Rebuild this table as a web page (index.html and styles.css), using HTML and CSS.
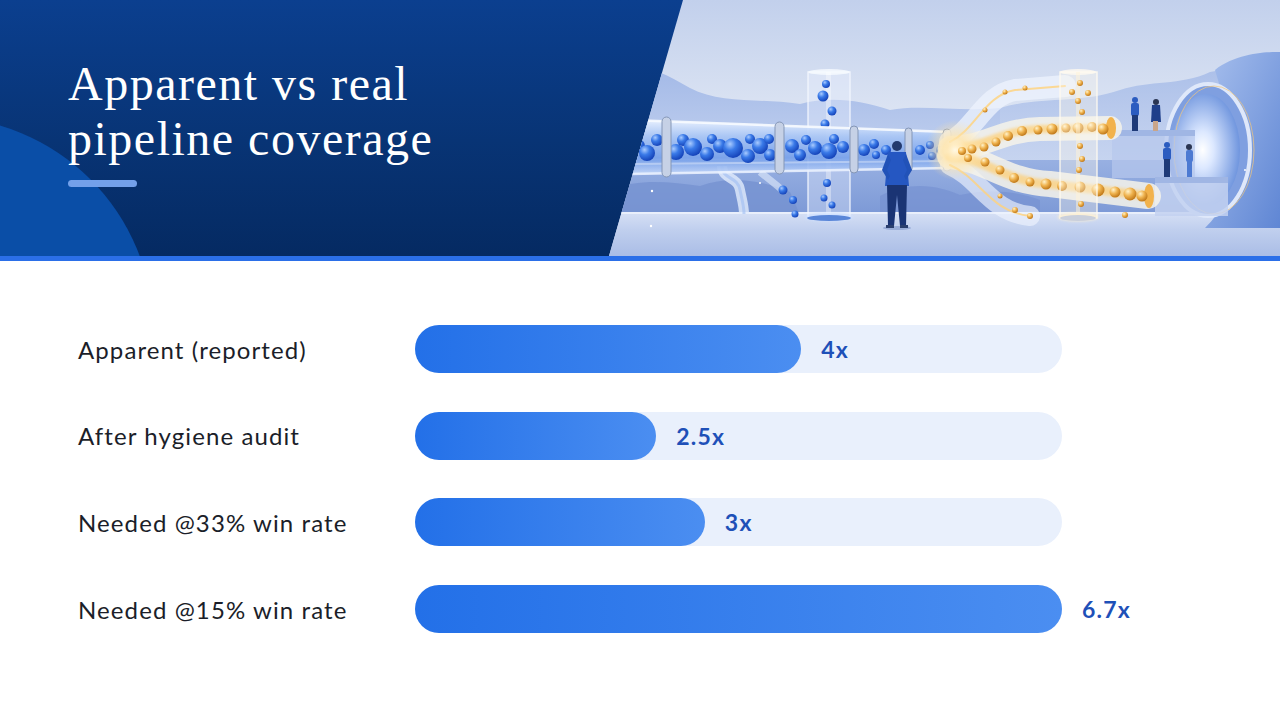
FILE: index.html
```html
<!DOCTYPE html>
<html lang="en">
<head>
<meta charset="utf-8">
<title>Apparent vs real pipeline coverage</title>
<link rel="stylesheet" href="styles.css">
</head>
<body>
<header class="hero">
  <div class="hero-text">
    <h1 class="title">Apparent vs real<br>pipeline coverage</h1>
    <div class="accent"></div>
  </div>
  <div class="hero-art">
    <svg class="art" viewBox="609 0 671 256" width="671" height="256" xmlns="http://www.w3.org/2000/svg">
      <defs>
        <linearGradient id="sky" x1="0" y1="0" x2="0" y2="1">
          <stop offset="0" stop-color="#c2d0ec"/>
          <stop offset="0.45" stop-color="#dce4f3"/>
          <stop offset="1" stop-color="#d2dcf1"/>
        </linearGradient>
        <linearGradient id="farMtn" x1="0" y1="0" x2="0" y2="1">
          <stop offset="0" stop-color="#a3b9e7"/>
          <stop offset="1" stop-color="#c6d4f0"/>
        </linearGradient>
        <linearGradient id="band" x1="0" y1="0" x2="0" y2="1">
          <stop offset="0" stop-color="#98b0e2"/>
          <stop offset="1" stop-color="#7c99d6"/>
        </linearGradient>
        <linearGradient id="floor" x1="0" y1="0" x2="0" y2="1">
          <stop offset="0" stop-color="#d6e0f5"/>
          <stop offset="0.4" stop-color="#c0cfee"/>
          <stop offset="1" stop-color="#aabde6"/>
        </linearGradient>
        <linearGradient id="glass" x1="0" y1="0" x2="0" y2="1">
          <stop offset="0" stop-color="#eaf2ff" stop-opacity="0.95"/>
          <stop offset="0.3" stop-color="#a9c6f5" stop-opacity="0.9"/>
          <stop offset="0.7" stop-color="#6f9be9" stop-opacity="0.85"/>
          <stop offset="1" stop-color="#c4d7f8" stop-opacity="0.95"/>
        </linearGradient>
        <radialGradient id="blueBall" cx="0.35" cy="0.3" r="0.7">
          <stop offset="0" stop-color="#a9cbff"/>
          <stop offset="0.45" stop-color="#3a7ae8"/>
          <stop offset="1" stop-color="#1645bb"/>
        </radialGradient>
        <radialGradient id="goldBall" cx="0.35" cy="0.3" r="0.7">
          <stop offset="0" stop-color="#fff3cc"/>
          <stop offset="0.5" stop-color="#f0b450"/>
          <stop offset="1" stop-color="#c27a1a"/>
        </radialGradient>
        <radialGradient id="glow" cx="0.5" cy="0.5" r="0.5">
          <stop offset="0" stop-color="#fff8e4" stop-opacity="1"/>
          <stop offset="0.4" stop-color="#ffe3a6" stop-opacity="0.75"/>
          <stop offset="1" stop-color="#ffe3a6" stop-opacity="0"/>
        </radialGradient>
        <radialGradient id="portalGlow" cx="0.45" cy="0.5" r="0.55">
          <stop offset="0" stop-color="#ffffff"/>
          <stop offset="0.3" stop-color="#dce8ff"/>
          <stop offset="1" stop-color="#6f95de"/>
        </radialGradient>
        <linearGradient id="blob" x1="0" y1="0" x2="1" y2="1">
          <stop offset="0" stop-color="#a7bfed"/>
          <stop offset="1" stop-color="#5f86d4"/>
        </linearGradient>
        <filter id="soft" x="-50%" y="-50%" width="200%" height="200%">
          <feGaussianBlur stdDeviation="3"/>
        </filter>
        <filter id="softer" x="-50%" y="-50%" width="200%" height="200%">
          <feGaussianBlur stdDeviation="1.5"/>
        </filter>
      </defs>

      <rect x="609" y="0" width="671" height="256" fill="url(#sky)"/>

      <!-- far mountains -->
      <path d="M609 70 C640 62 660 70 690 88 C720 104 760 98 800 104 C830 96 860 100 890 110 C920 104 960 112 1000 108 L1000 170 L609 170 Z" fill="url(#farMtn)"/>
      <path d="M1000 108 C1040 96 1080 104 1120 90 C1150 80 1180 86 1210 72 L1280 60 L1280 170 L1000 170 Z" fill="url(#farMtn)" opacity="0.85"/>

      <!-- mid band under pipe -->
      <path d="M609 160 L1280 160 L1280 215 L609 215 Z" fill="url(#band)"/>
      <path d="M609 190 C640 178 670 182 700 186 C730 175 760 180 790 192 L800 215 L609 215 Z" fill="#7692d1" opacity="0.8"/>
      <path d="M880 196 C910 180 940 186 960 195 C990 188 1020 192 1040 200 L1040 215 L880 215 Z" fill="#7692d1" opacity="0.7"/>

      <!-- floor -->
      <rect x="609" y="212" width="671" height="44" fill="url(#floor)"/>
      <rect x="609" y="212" width="671" height="2" fill="#eef3fd" opacity="0.8"/>

      <!-- right blob -->
      <path d="M1215 70 C1240 50 1280 52 1280 52 L1280 228 L1205 228 C1235 200 1240 150 1215 70 Z" fill="url(#blob)"/>

      <!-- portal -->
      <ellipse cx="1208" cy="150" rx="42" ry="66" fill="#7f9fe0"/>
      <ellipse cx="1206" cy="150" rx="34" ry="56" fill="url(#portalGlow)"/>
      <ellipse cx="1208" cy="150" rx="42" ry="66" fill="none" stroke="#dfe8fa" stroke-width="4"/>
      <ellipse cx="1214" cy="150" rx="40" ry="64" fill="none" stroke="#f3c77a" stroke-width="1" opacity="0.7"/>

      <!-- platforms -->
      <path d="M1112 130 L1195 130 L1195 136 L1112 136 Z" fill="#a0b6e4"/>
      <path d="M1112 136 L1195 136 L1195 178 L1112 178 Z" fill="#b7c8ec" opacity="0.7"/>
      <path d="M1155 177 L1228 177 L1228 183 L1155 183 Z" fill="#a0b6e4"/>
      <path d="M1155 183 L1228 183 L1228 216 L1155 216 Z" fill="#c3d1f0" opacity="0.85"/>

      <!-- people on platforms -->
      <g fill="#2b5cc0">
        <circle cx="1135" cy="100" r="3"/>
        <rect x="1131" y="103" width="8" height="13" rx="2"/>
        <rect x="1132" y="115" width="6" height="16" fill="#1e3a78"/>
        <circle cx="1156" cy="102" r="3" fill="#2a3552"/>
        <path d="M1152 105 L1160 105 L1161 122 L1151 122 Z" fill="#1f3f8a"/>
        <rect x="1153" y="121" width="5" height="10" fill="#c9a58a"/>
        <circle cx="1167" cy="145" r="3"/>
        <rect x="1163" y="148" width="8" height="12" rx="2"/>
        <rect x="1164" y="159" width="6" height="18" fill="#1e3a78"/>
        <circle cx="1189" cy="147" r="3" fill="#2a3552"/>
        <rect x="1186" y="150" width="7" height="12" rx="2" fill="#4d7ad2"/>
        <rect x="1187" y="161" width="5" height="16" fill="#4d7ad2"/>
      </g>

      <!-- small drain pipe -->
      <path d="M722 166 C722 180 738 176 740 190 C742 200 744 206 744 214" fill="none" stroke="#e2ecfc" stroke-width="10" opacity="0.8"/>
      <path d="M722 166 C722 180 738 176 740 190 C742 200 744 206 744 214" fill="none" stroke="#9fbdf2" stroke-width="3" opacity="0.6"/>
      <path d="M760 172 C770 180 778 186 782 190" fill="none" stroke="#e2ecfc" stroke-width="7" opacity="0.6"/>
      <circle cx="783" cy="190" r="4.5" fill="url(#blueBall)"/>
      <circle cx="793" cy="200" r="4" fill="url(#blueBall)"/>
      <circle cx="795" cy="214" r="3.5" fill="url(#blueBall)"/>

      <!-- vertical tube 1 -->
      <rect x="808" y="72" width="42" height="146" fill="#eaf2ff" opacity="0.35"/>
      <rect x="808" y="72" width="42" height="146" fill="none" stroke="#f4f8ff" stroke-width="1.5" opacity="0.8"/>
      <ellipse cx="829" cy="72" rx="21" ry="3" fill="#f7fbff" opacity="0.8"/>
      <rect x="826" y="72" width="5" height="146" fill="#ffffff" opacity="0.35"/>
      <circle cx="826" cy="84" r="4" fill="url(#blueBall)"/>
      <circle cx="823" cy="96" r="5.5" fill="url(#blueBall)"/>
      <circle cx="832" cy="111" r="4.5" fill="url(#blueBall)"/>
      <circle cx="825" cy="124" r="4.5" fill="url(#blueBall)"/>
      <circle cx="827" cy="183" r="4" fill="url(#blueBall)"/>
      <circle cx="824" cy="198" r="3.5" fill="url(#blueBall)"/>
      <circle cx="832" cy="205" r="3.5" fill="url(#blueBall)"/>
      <ellipse cx="829" cy="217" rx="24" ry="4" fill="#cfe0ff" filter="url(#softer)"/>
      <ellipse cx="829" cy="218" rx="22" ry="3" fill="#5a86d8"/>

      <!-- main pipe -->
      <path d="M630 120 L950 132 L950 168 L630 174 Z" fill="url(#glass)"/>
      <path d="M630 120 L950 132" stroke="#f8fbff" stroke-width="2.5" opacity="0.9"/>
      <path d="M630 174 L950 168" stroke="#eef4ff" stroke-width="2.5" opacity="0.85"/>
      <path d="M630 164 L950 161" stroke="#ffffff" stroke-width="2" opacity="0.35"/>
      <g fill="url(#blueBall)">
        <circle cx="638" cy="146" r="7"/>
        <circle cx="647" cy="153" r="8"/>
        <circle cx="657" cy="140" r="6"/>
        <circle cx="676" cy="152" r="8"/>
        <circle cx="683" cy="140" r="6"/>
        <circle cx="693" cy="147" r="9"/>
        <circle cx="707" cy="154" r="7"/>
        <circle cx="712" cy="139" r="5"/>
        <circle cx="720" cy="146" r="7"/>
        <circle cx="733" cy="148" r="10"/>
        <circle cx="748" cy="156" r="7"/>
        <circle cx="750" cy="139" r="5"/>
        <circle cx="760" cy="146" r="8"/>
        <circle cx="770" cy="155" r="6"/>
        <circle cx="769" cy="139" r="5"/>
        <circle cx="792" cy="146" r="7"/>
        <circle cx="800" cy="155" r="6"/>
        <circle cx="806" cy="140" r="5"/>
        <circle cx="815" cy="148" r="7"/>
        <circle cx="829" cy="151" r="8"/>
        <circle cx="834" cy="139" r="5"/>
        <circle cx="843" cy="147" r="6"/>
        <circle cx="864" cy="150" r="6"/>
        <circle cx="874" cy="144" r="5"/>
        <circle cx="876" cy="155" r="4"/>
        <circle cx="886" cy="150" r="5"/>
        <circle cx="920" cy="150" r="5"/>
        <circle cx="930" cy="145" r="4"/>
        <circle cx="932" cy="156" r="4"/>
        <circle cx="940" cy="150" r="4"/>
      </g>
      <!-- rings -->
      <g fill="#c6d1e6" stroke="#8496b6" stroke-width="1">
        <rect x="662" y="117" width="9" height="60" rx="4.5"/>
        <rect x="775" y="122" width="9" height="52" rx="4.5"/>
        <rect x="850" y="126" width="8" height="47" rx="4"/>
        <rect x="905" y="128" width="7" height="44" rx="3.5"/>
        <rect x="943" y="129" width="8" height="42" rx="4" fill="#d9e2f3"/>
      </g>

      <!-- golden branches: outer glass tubes -->
      <g fill="none" stroke-linecap="round">
        <path d="M950 142 C975 130 985 95 1015 90 L1065 86" stroke="#eef3fd" stroke-width="22" opacity="0.75"/>
        <path d="M950 165 C980 178 990 212 1030 216" stroke="#eef3fd" stroke-width="20" opacity="0.65"/>
        <path d="M950 148 C985 148 1000 130 1040 129 L1110 128" stroke="#f6f3ea" stroke-width="24" opacity="0.85"/>
        <path d="M950 156 C985 158 1005 182 1050 184 L1148 196" stroke="#f6f3ea" stroke-width="26" opacity="0.85"/>
        <path d="M950 148 C985 148 1000 130 1040 129 L1110 128" stroke="#ffcf72" stroke-width="8" opacity="0.7" filter="url(#softer)"/>
        <path d="M950 156 C985 158 1005 182 1050 184 L1148 196" stroke="#ffcf72" stroke-width="9" opacity="0.7" filter="url(#softer)"/>
        <path d="M950 142 C975 130 985 95 1015 90 L1065 86" stroke="#ffd27a" stroke-width="2" opacity="0.8"/>
        <path d="M950 165 C980 178 990 212 1030 216" stroke="#ffd27a" stroke-width="2" opacity="0.8"/>
      </g>
      <ellipse cx="955" cy="150" rx="30" ry="30" fill="url(#glow)"/>
      <ellipse cx="1111" cy="128" rx="5" ry="11" fill="#f2b24b"/>
      <ellipse cx="1149" cy="196" rx="5" ry="12" fill="#f2b24b"/>
      <g fill="url(#goldBall)">
        <circle cx="962" cy="151" r="4"/>
        <circle cx="972" cy="149" r="4.5"/>
        <circle cx="984" cy="147" r="4.5"/>
        <circle cx="996" cy="142" r="4.5"/>
        <circle cx="1008" cy="136" r="5"/>
        <circle cx="1022" cy="131" r="5"/>
        <circle cx="1038" cy="130" r="4.5"/>
        <circle cx="1052" cy="129" r="5.5"/>
        <circle cx="1066" cy="128" r="4.5"/>
        <circle cx="1078" cy="128" r="5.5"/>
        <circle cx="1092" cy="127" r="5"/>
        <circle cx="1103" cy="129" r="5.5"/>
        <circle cx="968" cy="158" r="4"/>
        <circle cx="985" cy="162" r="4.5"/>
        <circle cx="1000" cy="170" r="4.5"/>
        <circle cx="1014" cy="178" r="5"/>
        <circle cx="1030" cy="182" r="4.5"/>
        <circle cx="1046" cy="184" r="5.5"/>
        <circle cx="1062" cy="186" r="5"/>
        <circle cx="1080" cy="187" r="5.5"/>
        <circle cx="1098" cy="190" r="6.5"/>
        <circle cx="1115" cy="192" r="5.5"/>
        <circle cx="1130" cy="194" r="6.5"/>
        <circle cx="1142" cy="196" r="5.5"/>
        <circle cx="985" cy="110" r="2.5"/>
        <circle cx="1005" cy="92" r="2.5"/>
        <circle cx="1025" cy="88" r="2.5"/>
        <circle cx="1015" cy="210" r="3"/>
        <circle cx="1030" cy="216" r="3"/>
        <circle cx="1000" cy="196" r="2.5"/>
      </g>

      <!-- vertical tube 2 -->
      <rect x="1060" y="72" width="37" height="146" fill="#fff8ea" opacity="0.35"/>
      <rect x="1060" y="72" width="37" height="146" fill="none" stroke="#fffaf0" stroke-width="1.5" opacity="0.85"/>
      <ellipse cx="1078" cy="72" rx="18" ry="3" fill="#fffaf0" opacity="0.8"/>
      <rect x="1076" y="72" width="4" height="146" fill="#fff3d8" opacity="0.5"/>
      <g fill="url(#goldBall)">
        <circle cx="1080" cy="83" r="3"/>
        <circle cx="1072" cy="92" r="3"/>
        <circle cx="1088" cy="93" r="3"/>
        <circle cx="1078" cy="101" r="3"/>
        <circle cx="1082" cy="112" r="3"/>
        <circle cx="1080" cy="146" r="3"/>
        <circle cx="1082" cy="159" r="3"/>
        <circle cx="1079" cy="170" r="3"/>
        <circle cx="1081" cy="204" r="3"/>
        <circle cx="1125" cy="215" r="3"/>
      </g>
      <ellipse cx="1078" cy="217" rx="20" ry="4" fill="#fff1d2" filter="url(#softer)"/>
      <ellipse cx="1078" cy="218" rx="18" ry="3" fill="#c9cfdc"/>

      <!-- person -->
      <g>
        <ellipse cx="897" cy="228" rx="14" ry="2" fill="#7d95c8" opacity="0.6"/>
        <circle cx="897" cy="146" r="5" fill="#233a6e"/>
        <path d="M888 152 L906 152 L909 186 L885 186 Z" fill="#2557c2"/>
        <path d="M888 154 L882 170 L888 180 L890 176 L887 170 L891 160 Z" fill="#2152b8"/>
        <path d="M906 154 L912 170 L906 180 L904 176 L907 170 L903 160 Z" fill="#2152b8"/>
        <path d="M887 185 L907 185 L906 226 L900 226 L897 195 L894 226 L888 226 Z" fill="#1a3474"/>
        <rect x="886" y="225" width="8" height="3" fill="#2a3f6e"/>
        <rect x="900" y="225" width="8" height="3" fill="#2a3f6e"/>
      </g>

      <!-- sparkles -->
      <g fill="#ffffff">
        <circle cx="652" cy="191" r="1.2"/>
        <circle cx="651" cy="226" r="1.2"/>
        <circle cx="760" cy="183" r="1"/>
        <circle cx="1245" cy="170" r="1"/>
      </g>
    </svg>
  </div>
</header>

<main class="chart">
  <div class="row">
    <div class="label">Apparent (reported)</div>
    <div class="track">
      <div class="fill" style="width: 59.7%"></div>
      <span class="value">4x</span>
    </div>
  </div>
  <div class="row">
    <div class="label">After hygiene audit</div>
    <div class="track">
      <div class="fill" style="width: 37.3%"></div>
      <span class="value">2.5x</span>
    </div>
  </div>
  <div class="row">
    <div class="label">Needed @33% win rate</div>
    <div class="track">
      <div class="fill" style="width: 44.8%"></div>
      <span class="value">3x</span>
    </div>
  </div>
  <div class="row">
    <div class="label">Needed @15% win rate</div>
    <div class="track">
      <div class="fill" style="width: 100%"></div>
      <span class="value">6.7x</span>
    </div>
  </div>
</main>
</body>
</html>
```

FILE: styles.css
```css
* {
  box-sizing: border-box;
}

html, body {
  margin: 0;
  padding: 0;
}

body {
  width: 1280px;
  height: 720px;
  overflow: hidden;
  background: #ffffff;
  font-family: "Lato", "Noto Sans", sans-serif;
}

.hero {
  position: relative;
  display: flex;
  height: 261px;
  background: linear-gradient(180deg, #0b3f8f 0%, #083475 55%, #052a62 100%);
  border-bottom: 5px solid #2b6fe8;
  overflow: hidden;
}

.hero::before {
  content: "";
  position: absolute;
  left: -273px;
  top: 117px;
  width: 426px;
  height: 426px;
  border-radius: 50%;
  background: #0a4ea7;
}

.hero-text {
  position: relative;
  z-index: 1;
  width: 609px;
  flex: none;
  padding: 56px 0 0 68px;
}

.title {
  margin: 0;
  font-family: "Liberation Serif", "Times New Roman", serif;
  font-weight: 400;
  font-size: 48px;
  line-height: 55px;
  letter-spacing: 1.5px;
  color: #ffffff;
}

.accent {
  margin-top: 14px;
  width: 69px;
  height: 7px;
  border-radius: 4px;
  background: #73a0ea;
}

.hero-art {
  flex: 1;
  height: 256px;
  clip-path: polygon(74px 0, 100% 0, 100% 100%, 0 100%);
}

.art {
  display: block;
  width: 671px;
  height: 256px;
}

.chart {
  display: flex;
  flex-direction: column;
  gap: 38.7px;
  padding: 64px 0 0 78px;
}

.row {
  display: flex;
  align-items: center;
  height: 48px;
}

.label {
  width: 337px;
  flex: none;
  font-size: 24px;
  letter-spacing: 1.1px;
  color: #1b1e29;
}

.track {
  display: flex;
  align-items: center;
  width: 647px;
  height: 48px;
  border-radius: 24px;
  background: #e9f0fc;
}

.fill {
  height: 48px;
  border-radius: 24px;
  background: linear-gradient(90deg, #2370e8 0%, #4b8ef1 100%);
  flex: none;
}

.value {
  margin-left: 20px;
  flex: none;
  font-size: 23px;
  font-weight: 700;
  letter-spacing: 1.2px;
  color: #1e50b8;
  white-space: nowrap;
}
```
